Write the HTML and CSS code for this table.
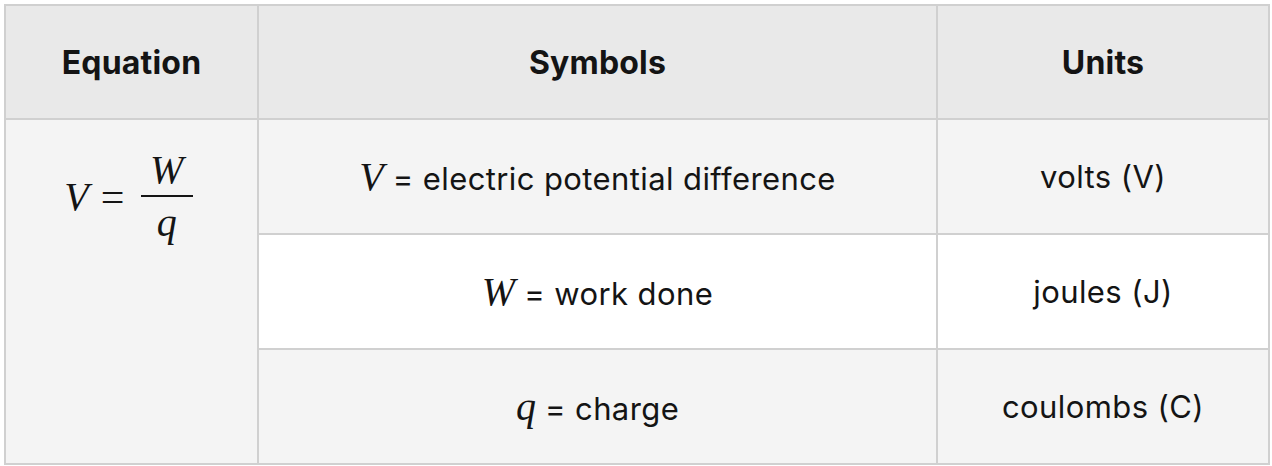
FILE: index.html
```html
<!DOCTYPE html>
<html>
<head>
<meta charset="utf-8">
<link rel="stylesheet" href="styles.css">
</head>
<body>
<table class="eq-table">
  <thead>
    <tr>
      <th class="col-eq">Equation</th>
      <th class="col-sym">Symbols</th>
      <th class="col-unit">Units</th>
    </tr>
  </thead>
  <tbody>
    <tr class="row-alt">
      <td class="eq-cell" rowspan="3">
        <span class="math">
          <span class="mi">V</span><span class="mo">=</span>
          <span class="frac"><span class="num mi">W</span><span class="bar"></span><span class="den mi">q</span></span>
        </span>
      </td>
      <td><span class="mi">V</span> = electric potential difference</td>
      <td>volts (V)</td>
    </tr>
    <tr class="row-white">
      <td><span class="mi">W</span> = work done</td>
      <td>joules (J)</td>
    </tr>
    <tr class="row-alt">
      <td><span class="mi">q</span> = charge</td>
      <td>coulombs (C)</td>
    </tr>
  </tbody>
</table>
</body>
</html>
```

FILE: styles.css
```css
html, body {
  margin: 0;
  padding: 0;
  background: #ffffff;
}
body {
  padding: 4px;
  font-family: Inter, "Noto Sans", sans-serif;
  color: #141414;
}
.eq-table {
  border-collapse: collapse;
  width: 1264px;
  table-layout: fixed;
}
.eq-table th,
.eq-table td {
  border: 2px solid #d0d0d0;
  text-align: center;
  vertical-align: middle;
  height: 115px;
  padding: 0;
  box-sizing: border-box;
}
.eq-table th {
  height: 114px;
  background: #e9e9e9;
  font-weight: 700;
  font-size: 32px;
  letter-spacing: 0.2px;
}
.col-eq { width: 253px; }
.col-sym { width: 679px; }
.col-unit { width: 332px; }
.eq-table td {
  font-size: 31px;
  font-weight: 400;
  letter-spacing: 0.4px;
}
.row-alt td { background: #f4f4f4; }
.row-white td { background: #ffffff; }
.eq-table td.eq-cell {
  background: #f4f4f4;
  vertical-align: top;
  padding-top: 29px;
}
.mi {
  font-family: "Liberation Serif", "DejaVu Serif", serif;
  font-style: italic;
  font-size: 40px;
  letter-spacing: 0;
  line-height: 1;
}
.math {
  display: inline-flex;
  align-items: center;
  font-family: "Liberation Serif", serif;
  font-size: 40px;
  margin-left: -6px;
}
.mo {
  margin: 0 14px 0 12px;
  font-size: 42px;
}
.frac {
  display: inline-flex;
  flex-direction: column;
  align-items: center;
  margin-left: 2px;
}
.frac .mi { line-height: 1.05; }
.bar {
  width: 52px;
  height: 2px;
  background: #141414;
  margin: 4px 0 5px;
}
```
